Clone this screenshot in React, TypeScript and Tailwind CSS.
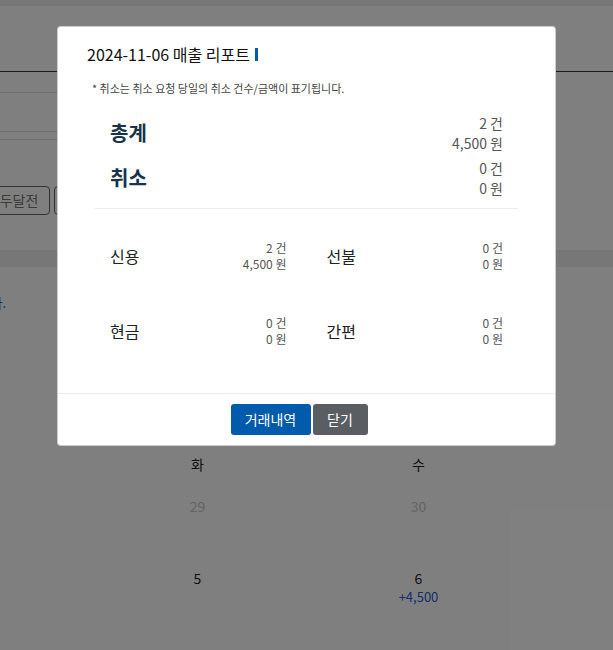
import React from 'react'

const font = "font-['Noto_Sans_CJK_KR','Noto_Sans',sans-serif]"

function SummaryRow({ label, count, amount }: { label: string; count: string; amount: string }) {
  return (
    <div className="flex items-center justify-between">
      <span className="text-[20px] font-bold leading-none text-[#17344a]">{label}</span>
      <div className="text-right text-[14px] leading-[20px] text-[#555]">
        <div>{count} 건</div>
        <div>{amount} 원</div>
      </div>
    </div>
  )
}

function PayCell({ label, count, amount }: { label: string; count: string; amount: string }) {
  return (
    <div className="flex items-center justify-between">
      <span className="text-[16px] leading-none text-[#222]">{label}</span>
      <div className="text-right text-[12px] leading-[16px] text-[#555]">
        <div>{count} 건</div>
        <div>{amount} 원</div>
      </div>
    </div>
  )
}

export default function App() {
  return (
    <div className={`relative h-[650px] overflow-hidden bg-white ${font}`}>
      {/* page behind the modal */}
      <div className="h-[6px] bg-[#eeeeee]" />
      <div className="h-[65px]" />
      <div className="border-t border-[#333]" />
      <div className="mt-[20px] h-[40px] w-[500px] border-y border-[#e0e0e0]" />
      <div className="mt-[7px] h-[47px] w-[500px] border-t border-[#e0e0e0]" />
      <div className="ml-[-12px] flex gap-[4px]">
        <button className="h-[29px] w-[62px] rounded-[4px] border border-[#666] text-[14px] text-[#777]">두달전</button>
        <button className="h-[29px] w-[62px] rounded-[4px] border border-[#666] text-[14px] text-[#777]">한달전</button>
      </div>
      <div className="mt-[35px] h-[17px] bg-[#eeeeee]" />
      <div className="ml-[-123px] mt-[27px] whitespace-nowrap text-[13px] leading-[18px] text-[#2c62c8]">
        매출 정보가 표기됩니다.
      </div>
      <div className="ml-[87px] mt-[142px] grid grid-cols-[221px_221px] text-center text-[14px] text-[#222]">
        <div className="leading-[20px]">화</div>
        <div className="leading-[20px]">수</div>
        <div className="mt-[22px] leading-[20px] text-[#c8c8c8]">29</div>
        <div className="mt-[22px] leading-[20px] text-[#c8c8c8]">30</div>
        <div className="mt-[52px] leading-[20px]">5</div>
        <div className="mt-[52px] leading-[20px]">
          6
          <div className="text-[13px] leading-[18px] text-[#2a5ad8]">+4,500</div>
        </div>
      </div>

      {/* modal */}
      <div className="absolute inset-0 flex items-start justify-center bg-black/50">
        <div className="mt-[26px] w-[499px] rounded-[4px] border border-black/20 bg-white">
          <div className="pl-[29px] pt-[15px]">
            <h2 className="flex items-center text-[16px] font-normal leading-[24px] text-[#111]">
              2024-11-06 매출 리포트
              <span className="ml-[5px] inline-block h-[13px] w-[3px] bg-[#005bac]" />
            </h2>
          </div>
          <p className="mt-[14px] pl-[34px] text-[11px] leading-[16px] text-[#444]">
            * 취소는 취소 요청 당일의 취소 건수/금액이 표기됩니다.
          </p>

          <div className="mx-[37px] mt-[17px] px-[15px]">
            <div className="flex flex-col gap-[5px]">
              <SummaryRow label="총계" count="2" amount="4,500" />
              <SummaryRow label="취소" count="0" amount="0" />
            </div>
          </div>
          <div className="mx-[37px] mt-[10px] border-t border-[#ebebeb]" />

          <div className="mx-[37px] grid grid-cols-2 gap-x-[40px] gap-y-[43px] px-[15px] pb-[46px] pt-[31px]">
            <PayCell label="신용" count="2" amount="4,500" />
            <PayCell label="선불" count="0" amount="0" />
            <PayCell label="현금" count="0" amount="0" />
            <PayCell label="간편" count="0" amount="0" />
          </div>

          <div className="flex justify-center gap-[2px] border-t border-[#e9ecef] pb-[10px] pr-[15px] pt-[10px]">
            <button className="h-[31px] w-[80px] rounded-[3px] bg-[#005bac] text-[14px] text-white">거래내역</button>
            <button className="h-[31px] w-[55px] rounded-[3px] bg-[#5a5e62] text-[14px] text-white">닫기</button>
          </div>
        </div>
      </div>
    </div>
  )
}
